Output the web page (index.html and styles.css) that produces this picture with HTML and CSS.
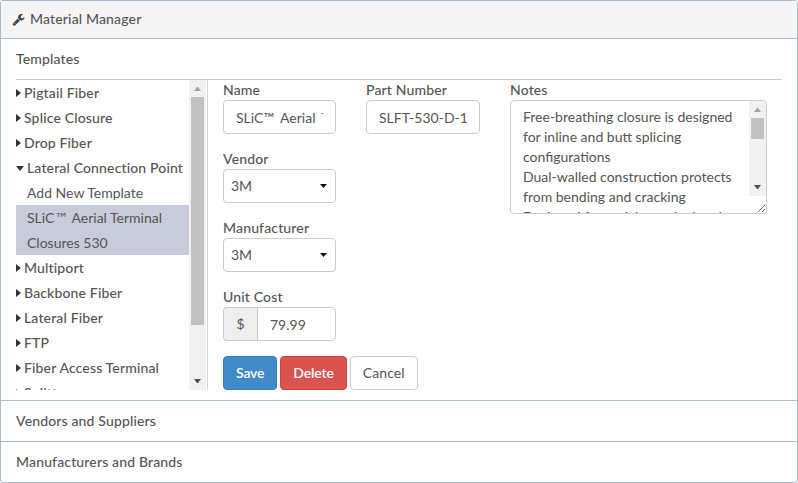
FILE: index.html
```html
<!DOCTYPE html>
<html lang="en">

<head>
    <meta charset="UTF-8">
    <meta name="viewport" content="width=device-width, initial-scale=1.0">
    <title>Material Manager</title>
    <link rel="stylesheet" href="styles.css">
</head>

<body>
    <div class="panel">
        <div class="panel-heading">
            <svg class="icon-wrench" viewBox="0 0 1792 1792" aria-hidden="true">
                <path d="M448 1472q0-26-19-45t-45-19-45 19-19 45 19 45 45 19 45-19 19-45zm644-420l-682 682q-37 37-90 37-52 0-91-37l-106-108q-38-36-38-90 0-53 38-91l681-681q39 98 114.5 173.5t173.5 114.5zm634-435q0 39-23 106-47 134-164.5 217.5t-258.5 83.5q-185 0-316.5-131.5t-131.5-316.5 131.5-316.5 316.5-131.5q58 0 121.5 16.5t107.5 46.5q16 11 16 28t-16 28l-293 169v224l193 107q5-3 79-48.5t135.5-81 70.5-35.5q15 0 23.5 10t8.5 25z"/>
            </svg>
            Material Manager
        </div>

        <section class="section section-open">
            <h4 class="section-title section-title-ruled">Templates</h4>
            <div class="section-body">
                <div class="tree-col">
                    <ul class="tree">
                        <li class="tree-group"><span class="caret-right"></span>Pigtail Fiber</li>
                        <li class="tree-group"><span class="caret-right"></span>Splice Closure</li>
                        <li class="tree-group"><span class="caret-right"></span>Drop Fiber</li>
                        <li class="tree-group"><span class="caret-down"></span>Lateral Connection Point</li>
                        <li class="tree-leaf">Add New Template</li>
                        <li class="tree-leaf tree-leaf-active">SLiC<span class="tm">™</span> Aerial Terminal Closures 530</li>
                        <li class="tree-group"><span class="caret-right"></span>Multiport</li>
                        <li class="tree-group"><span class="caret-right"></span>Backbone Fiber</li>
                        <li class="tree-group"><span class="caret-right"></span>Lateral Fiber</li>
                        <li class="tree-group"><span class="caret-right"></span>FTP</li>
                        <li class="tree-group"><span class="caret-right"></span>Fiber Access Terminal</li>
                        <li class="tree-group"><span class="caret-right"></span>Splitter</li>
                    </ul>
                    <div class="scrollbar">
                        <span class="arrow-up"></span>
                        <span class="thumb thumb-tree"></span>
                        <span class="arrow-down"></span>
                    </div>
                </div>

                <form class="form">
                    <div class="field">
                        <label for="name">Name</label>
                        <input class="control control-name" id="name" type="text" value="SLiC™ Aerial Terminal Closures 530">
                    </div>
                    <div class="field">
                        <label for="part">Part Number</label>
                        <input class="control" id="part" type="text" value="SLFT-530-D-1">
                    </div>
                    <div class="field field-notes">
                        <label for="notes">Notes</label>
                        <div class="notes-box">
                            <textarea class="control control-notes" id="notes">Free-breathing closure is designed for inline and butt splicing configurations
Dual-walled construction protects from bending and cracking
Designed for aerial, terminal and pedestal applications</textarea>
                            <div class="scrollbar scrollbar-notes">
                                <span class="arrow-up"></span>
                                <span class="thumb thumb-notes"></span>
                                <span class="arrow-down"></span>
                            </div>
                        </div>
                    </div>
                    <div class="field field-first">
                        <label for="vendor">Vendor</label>
                        <select class="control control-select" id="vendor">
                            <option>3M</option>
                        </select>
                    </div>
                    <div class="field field-first">
                        <label for="manufacturer">Manufacturer</label>
                        <select class="control control-select" id="manufacturer">
                            <option>3M</option>
                        </select>
                    </div>
                    <div class="field field-first">
                        <label for="cost">Unit Cost</label>
                        <div class="input-group">
                            <span class="input-addon">$</span>
                            <input class="control" id="cost" type="text" value="79.99">
                        </div>
                    </div>
                    <div class="buttons">
                        <button class="btn btn-save" type="button">Save</button>
                        <button class="btn btn-delete" type="button">Delete</button>
                        <button class="btn btn-cancel" type="button">Cancel</button>
                    </div>
                </form>
            </div>
        </section>

        <section class="section">
            <h4 class="section-title">Vendors and Suppliers</h4>
        </section>

        <section class="section">
            <h4 class="section-title">Manufacturers and Brands</h4>
        </section>
    </div>
</body>

</html>
```

FILE: styles.css
```css
* {
    box-sizing: border-box;
}

body {
    margin: 0;
    font-family: Lato, "Open Sans", sans-serif;
    font-size: 14px;
    line-height: 20px;
    color: #555;
    background-color: #fff;
}

.panel {
    border: 1px solid #aebccd;
    border-radius: 3px;
}

.panel-heading {
    display: flex;
    align-items: center;
    gap: 5px;
    height: 37px;
    padding: 0 11px 1px;
    background-color: #f5f5f5;
    font-weight: 500;
    letter-spacing: 0.15px;
}

.icon-wrench {
    width: 13px;
    height: 13px;
    fill: #444;
}

.section {
    border-top: 1px solid #aebccd;
}

.section-title {
    margin: 0 15px;
    padding: 10px 0;
    font-size: 14px;
    font-weight: 500;
    letter-spacing: 0.15px;
}

.section-title-ruled {
    border-bottom: 1px solid #ccc;
}

.section-body {
    display: flex;
    height: 320px;
    padding: 0 15px 10px;
}

/* tree on the left */
.tree-col {
    display: flex;
    height: 310px;
    padding-right: 1px;
    border-right: 1px solid #d5d5d5;
}

.tree {
    width: 173px;
    margin: 0;
    padding: 0;
    list-style: none;
    overflow: hidden;
    line-height: 25px;
}

.tree-group {
    font-weight: 500;
    letter-spacing: 0.15px;
    white-space: nowrap;
}

.tree-leaf {
    padding-left: 11px;
    padding-right: 16px;
}

.tree-leaf-active {
    background-color: #c8cbd9;
}

.tm {
    font-family: "DejaVu Sans", sans-serif;
    line-height: 0;
}

.caret-right,
.caret-down {
    display: inline-block;
    vertical-align: middle;
    width: 0;
    height: 0;
    margin-top: -2px;
}

.caret-right {
    margin-right: 3px;
    border-top: 4px solid transparent;
    border-bottom: 4px solid transparent;
    border-left: 5px solid #333;
}

.caret-down {
    margin-right: 3px;
    border-left: 4.5px solid transparent;
    border-right: 4.5px solid transparent;
    border-top: 5px solid #333;
}

/* scrollbars are drawn by hand */
.scrollbar {
    display: flex;
    flex-direction: column;
    align-items: center;
    width: 17px;
    background-color: #f1f1f1;
}

.scrollbar-notes {
    position: absolute;
    top: 1px;
    right: 1px;
    height: 95px;
    border-top-right-radius: 3px;
}

.arrow-up,
.arrow-down {
    flex: none;
    width: 7px;
    height: 4px;
    border-left: 3.5px solid transparent;
    border-right: 3.5px solid transparent;
}

.arrow-up {
    margin-top: 7px;
    margin-bottom: 6px;
    border-bottom: 4px solid #a3a3a3;
}

.arrow-down {
    margin-top: auto;
    margin-bottom: 7px;
    border-top: 4px solid #505050;
}

.thumb {
    flex: none;
    width: 13px;
    background-color: #c1c1c1;
}

.thumb-tree {
    height: 228px;
}

.thumb-notes {
    height: 21px;
}

/* form on the right */
.form {
    display: grid;
    grid-template-columns: 113px 114px 257px;
    grid-template-rows: repeat(4, auto) 34px;
    column-gap: 30px;
    row-gap: 15px;
    align-content: start;
    padding-left: 15px;
}

.field label {
    display: block;
    font-weight: 500;
    letter-spacing: 0.15px;
}

.field-notes {
    grid-column: 3;
    grid-row: 1 / span 3;
}

.field-first {
    grid-column: 1;
}

.notes-box {
    position: relative;
}

.control {
    display: block;
    width: 100%;
    height: 34px;
    padding: 6px 12px;
    border: 1px solid #ccc;
    border-radius: 4px;
    background-color: #fff;
    color: #555;
    font-family: inherit;
    font-size: 14px;
    line-height: 20px;
}

.control-name {
    word-spacing: 3px;
}

.control-notes {
    height: 114px;
    padding-right: 29px;
    overflow: hidden;
}

.control-select {
    appearance: none;
    padding-left: 7px;
    background-repeat: no-repeat;
    background-position: right 8px center;
    background-image: url("data:image/svg+xml,%3Csvg xmlns='http://www.w3.org/2000/svg' width='7' height='4'%3E%3Cpath d='M0 0H7L3.5 4z' fill='%23111'/%3E%3C/svg%3E");
}

.input-group {
    display: flex;
}

.input-addon {
    width: 34px;
    padding: 6px 0;
    border: 1px solid #ccc;
    border-right: 0;
    border-radius: 4px 0 0 4px;
    background-color: #eee;
    text-align: center;
}

.input-group .control {
    flex: 1;
    min-width: 0;
    border-radius: 0 4px 4px 0;
}

.buttons {
    grid-column: 1 / span 3;
    display: flex;
    gap: 3px;
}

.btn {
    height: 34px;
    padding: 6px 12px;
    border: 1px solid transparent;
    border-radius: 4px;
    font-family: inherit;
    font-size: 14px;
    line-height: 20px;
}

.btn-save {
    background-color: #428bca;
    border-color: #357ebd;
    color: #fff;
    font-weight: 600;
    letter-spacing: -0.15px;
}

.btn-delete {
    background-color: #d9534f;
    border-color: #d43f3a;
    color: #fff;
    font-weight: 600;
    letter-spacing: -0.15px;
}

.btn-cancel {
    background-color: #fff;
    border-color: #ccc;
    color: #555;
    letter-spacing: 0.1px;
}
```
